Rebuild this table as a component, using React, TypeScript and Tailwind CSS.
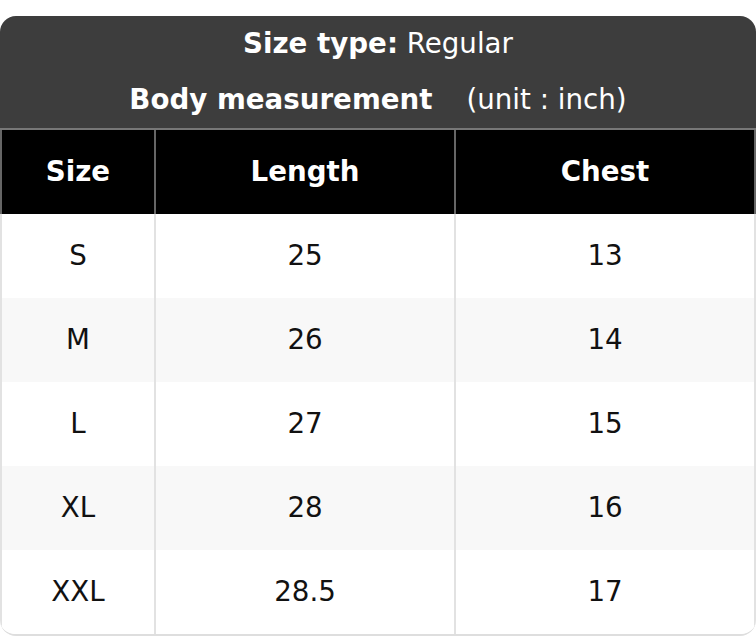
const rows = [
  { size: "S", length: "25", chest: "13" },
  { size: "M", length: "26", chest: "14" },
  { size: "L", length: "27", chest: "15" },
  { size: "XL", length: "28", chest: "16" },
  { size: "XXL", length: "28.5", chest: "17" },
];

const App = () => {
  return (
    <div className="w-[756px] h-[636px] bg-white pt-4 font-['DejaVu_Sans',sans-serif] text-[27.7px]">
      <div className="rounded-2xl overflow-hidden border-b-2 border-[#dedede]">
        {/* Title */}
        <div className="bg-[#3d3d3d] text-white border-b-2 border-[#777]">
          <div className="h-14 flex items-center justify-center">
            <span className="font-bold">Size type:</span>
            <span>&nbsp;Regular</span>
          </div>
          <div className="h-14 flex items-center justify-center gap-[34px]">
            <span className="font-bold">Body measurement</span>
            <span>(unit : inch)</span>
          </div>
        </div>

        {/* Column header */}
        <div className="grid grid-cols-[154px_300px_1fr] h-[84px] bg-black text-white font-bold border-x-2 border-[#666]">
          <div className="flex items-center justify-center border-r-2 border-[#666]">Size</div>
          <div className="flex items-center justify-center border-r-2 border-[#666]">Length</div>
          <div className="flex items-center justify-center">Chest</div>
        </div>

        {/* Rows */}
        {rows.map((r, i) => (
          <div
            key={r.size}
            className={`grid grid-cols-[154px_300px_1fr] h-[84px] text-[#111] border-x-2 border-[#e2e2e2] ${
              i % 2 === 1 ? "bg-[#f8f8f8]" : "bg-white"
            }`}
          >
            <div className="flex items-center justify-center border-r-2 border-[#e2e2e2]">{r.size}</div>
            <div className="flex items-center justify-center border-r-2 border-[#e2e2e2]">{r.length}</div>
            <div className="flex items-center justify-center">{r.chest}</div>
          </div>
        ))}
      </div>
    </div>
  );
};

export default App;
